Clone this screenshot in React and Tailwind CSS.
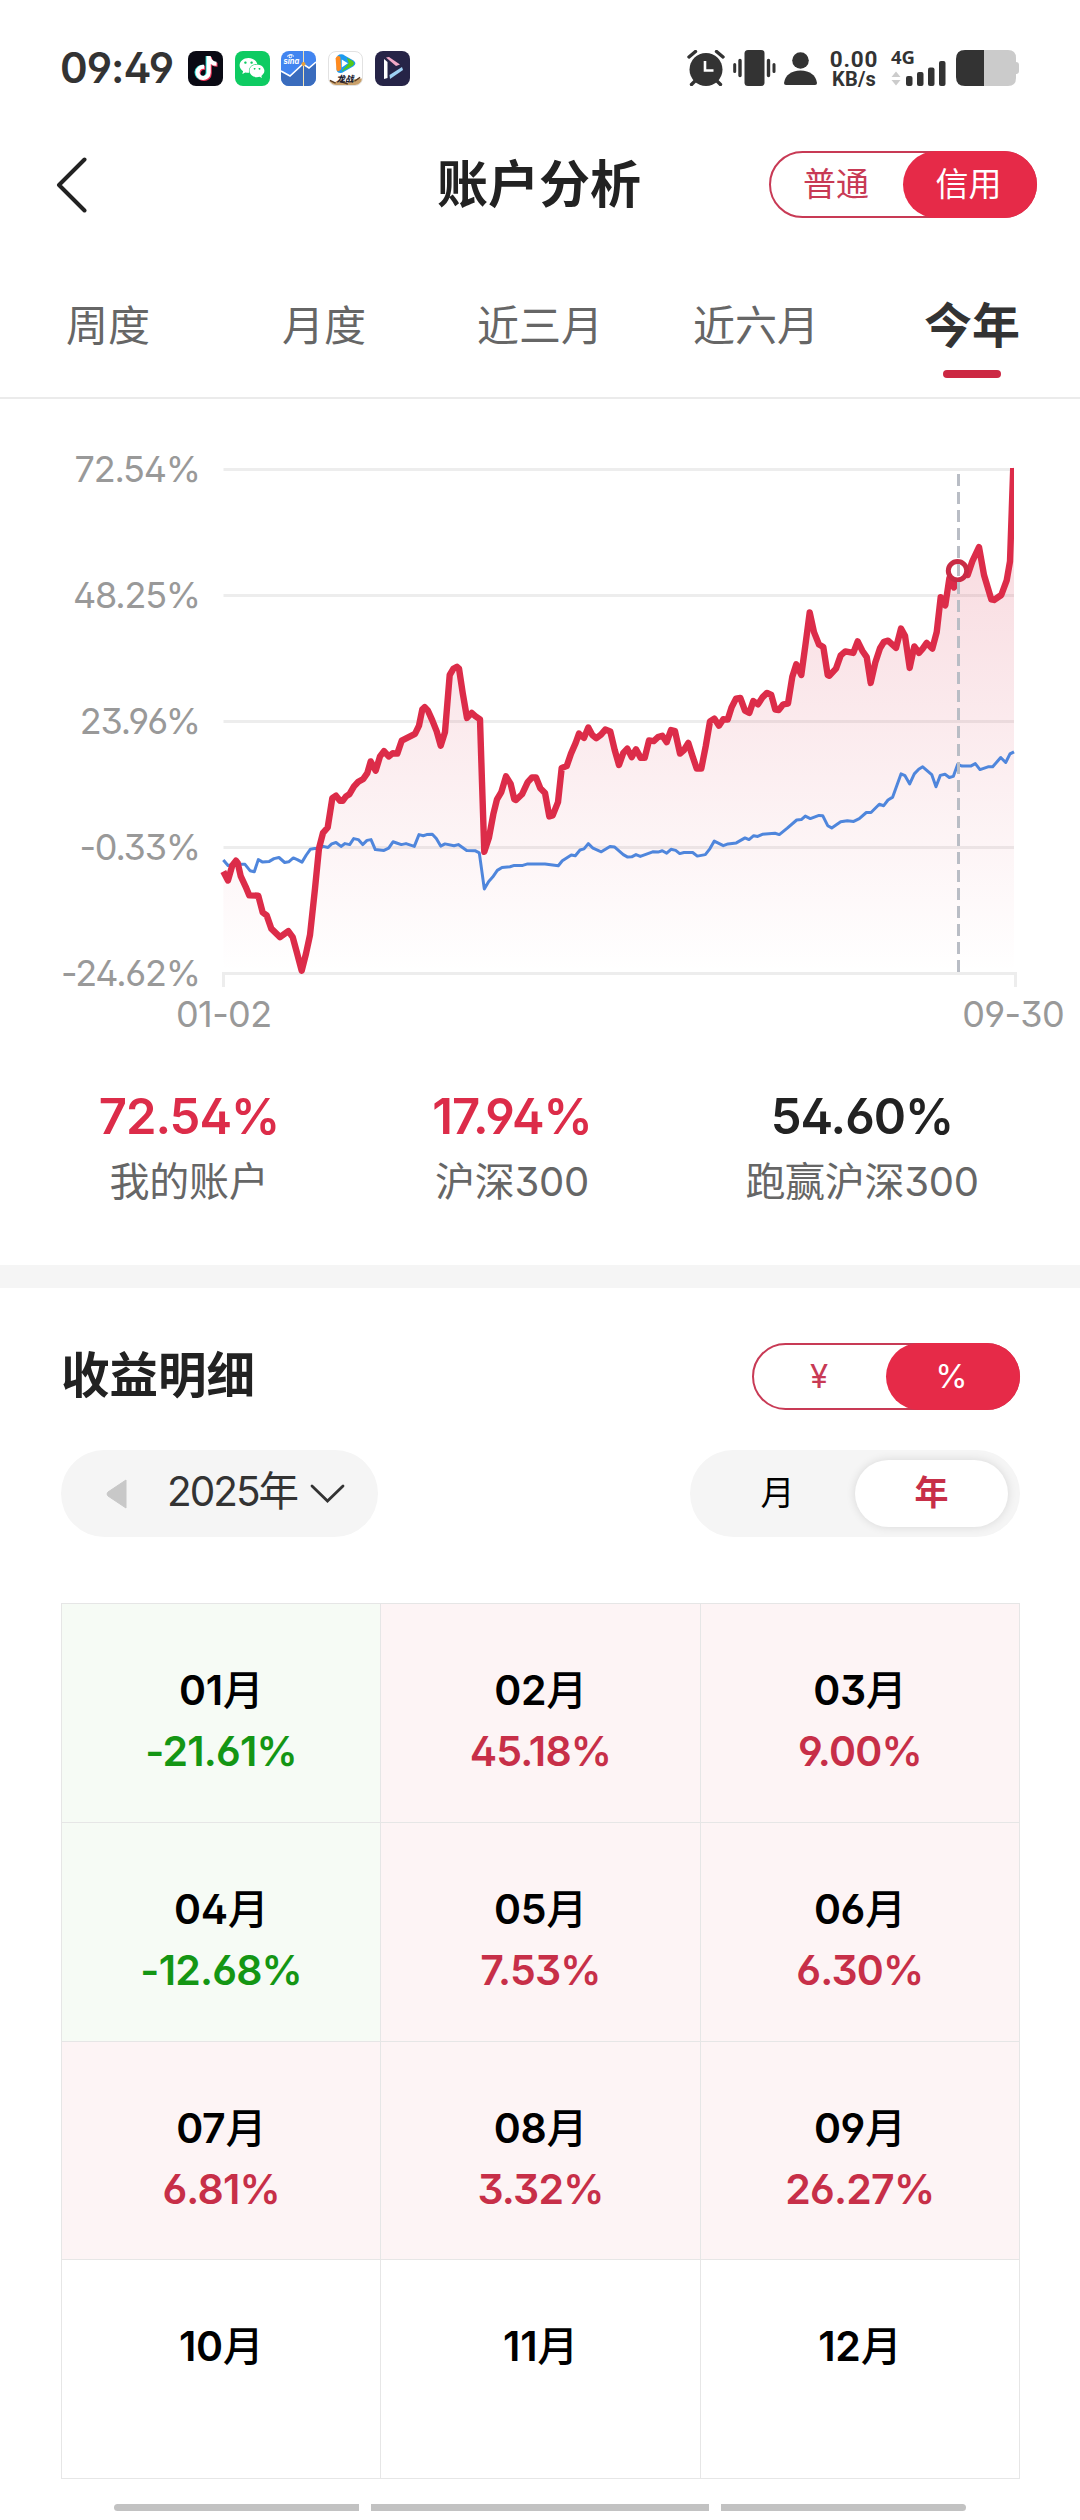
import React, { useState } from 'react';
import { FaTiktok, FaWeixin } from 'react-icons/fa6';

const tabs = ['周度', '月度', '近三月', '近六月', '今年'];

const months = [
  { name: '01', value: '-21.61%' },
  { name: '02', value: '45.18%' },
  { name: '03', value: '9.00%' },
  { name: '04', value: '-12.68%' },
  { name: '05', value: '7.53%' },
  { name: '06', value: '6.30%' },
  { name: '07', value: '6.81%' },
  { name: '08', value: '3.32%' },
  { name: '09', value: '26.27%' },
  { name: '10' },
  { name: '11' },
  { name: '12' },
];

// x,y pairs, three units per pixel across and 2.8 down
const accountData = '70,1180 84,1205 97,1163 108,1150 113,1156 122,1193 137,1223 148,1247 175,1248 188,1295 200,1303 214,1340 240,1364 265,1347 278,1364 290,1405 305,1458 318,1410 330,1358 345,1228 357,1115 369,1072 383,1057 397,975 408,968 420,982 428,982 438,970 448,964 462,942 475,929 490,921 502,905 512,872 527,898 540,858 552,843 566,858 578,849 592,850 605,814 645,795 657,772 667,726 674,720 684,730 697,757 710,788 722,828 735,790 749,630 760,613 771,607 777,612 788,680 801,750 815,736 826,745 840,754 846,930 853,1125 867,1085 880,1020 891,978 904,958 918,914 932,935 943,978 948,980 966,964 983,930 996,917 1008,917 1021,947 1035,960 1048,1026 1058,1023 1074,986 1085,890 1100,885 1113,850 1127,820 1137,794 1152,806 1165,777 1177,798 1189,807 1203,797 1216,783 1231,788 1244,840 1257,882 1270,848 1282,836 1295,860 1308,838 1322,862 1334,862 1347,813 1361,815 1374,804 1387,800 1400,818 1413,784 1425,787 1440,850 1452,840 1465,820 1477,855 1490,892 1504,892 1517,830 1530,760 1543,752 1557,772 1570,754 1583,755 1595,720 1608,696 1621,694 1635,730 1648,736 1660,703 1674,712 1688,692 1701,680 1714,686 1726,727 1736,728 1750,712 1764,710 1777,635 1789,600 1804,630 1817,540 1829,455 1842,510 1857,545 1870,552 1883,630 1888,632 1908,612 1922,575 1936,564 1960,568 1973,536 1987,562 2000,580 2012,652 2026,595 2040,555 2052,537 2064,534 2088,554 2103,500 2115,520 2129,610 2143,550 2157,568 2168,556 2180,540 2197,556 2210,510 2222,412 2236,435 2248,360 2262,385 2272,338 2290,345 2303,350 2317,312 2337,272 2352,350 2374,418 2382,420 2404,406 2420,365 2430,312 2440,45';

const indexData = '70,1148 84,1163 110,1160 135,1160 150,1178 163,1181 175,1147 188,1154 208,1152 222,1144 237,1141 254,1155 266,1153 280,1142 292,1147 306,1154 319,1134 331,1118 344,1116 357,1116 370,1110 384,1113 395,1103 408,1099 423,1110 435,1102 449,1105 461,1088 475,1091 488,1105 501,1093 513,1091 526,1119 552,1121 566,1115 579,1097 592,1101 604,1105 618,1102 643,1110 657,1077 670,1080 680,1077 697,1076 709,1088 722,1109 735,1103 762,1108 775,1105 800,1121 825,1122 838,1128 853,1229 866,1208 878,1196 892,1177 906,1169 930,1167 943,1163 968,1163 983,1159 1035,1159 1075,1164 1087,1150 1114,1134 1126,1136 1140,1120 1152,1117 1165,1102 1179,1115 1204,1125 1230,1110 1244,1112 1270,1133 1283,1140 1295,1139 1308,1133 1321,1138 1358,1125 1374,1126 1387,1122 1400,1129 1413,1118 1427,1121 1439,1130 1452,1127 1478,1127 1492,1137 1516,1133 1530,1116 1543,1095 1570,1108 1584,1103 1609,1100 1635,1086 1647,1091 1661,1080 1673,1082 1687,1076 1725,1073 1738,1077 1762,1059 1790,1036 1804,1035 1816,1025 1831,1032 1857,1023 1868,1024 1883,1052 1895,1058 1922,1041 1942,1038 1961,1040 1978,1032 1999,1015 2013,1015 2038,992 2051,996 2064,980 2078,972 2103,907 2115,912 2129,935 2143,907 2156,894 2168,887 2195,909 2208,943 2221,911 2235,908 2248,917 2260,914 2273,880 2286,885 2312,885 2326,878 2340,895 2364,887 2378,887 2402,861 2417,875 2430,851 2442,845';

const toLine = (data) =>
  data
    .split(' ')
    .map((pair) => pair.split(',').map(Number))
    .map(([x, y]) => `${(x / 3).toFixed(1)},${(y / 2.8).toFixed(1)}`)
    .join(' ');

const AppIcon = ({ className, children }) => (
  <div className={`relative w-[35px] h-[35px] rounded-[8px] overflow-hidden flex items-center justify-center ${className}`}>
    {children}
  </div>
);

const StatusBar = () => (
  <div className="h-[136px] pl-[60px] pr-[60px] pt-[50px] flex items-start justify-between text-[#333]">
    <div className="flex items-center h-9">
      <span className="w-[128px] text-[42px] leading-9 font-semibold tracking-[-1px]">09:49</span>
      <div className="flex gap-[11.7px]">
        <AppIcon className="bg-[#0a0a14]">
          <FaTiktok className="absolute left-[5px] top-[5px] text-[#25e5e0]" size={24} />
          <FaTiktok className="absolute left-[7px] top-[6px] text-[#f5365a]" size={24} />
          <FaTiktok className="absolute left-[6px] top-[5.5px] text-white" size={24} />
        </AppIcon>
        <AppIcon className="bg-[#0ecb62]">
          <FaWeixin className="text-white" size={26} />
        </AppIcon>
        <AppIcon className="bg-[#4285f0]">
          <svg width="35" height="35" viewBox="0 0 35 35">
            <path d="M0 20 L9 25 L22 13 L28 17 L35 11 V35 H0Z" fill="#3a6cbd" />
            <path d="M0 20 L9 25 L22 13 L28 17 L35 11" fill="none" stroke="#fff" strokeWidth="1.6" />
            <path d="M22.5 0 V35" stroke="#f3e3b5" strokeWidth="1" />
            <circle cx="22.5" cy="13" r="2" fill="#e9a13b" />
            <path d="M6 5.500 q4 -4 7 0 M8.200 5.500 a1.300 1.300 0 1 0 2.600 0 a1.300 1.300 0 1 0 -2.600 0" fill="none" stroke="#fff" strokeWidth="1" />
            <text x="2.500" y="12.500" fontSize="7.500" fontStyle="italic" fontWeight="700" fill="#fff">sina</text>
          </svg>
        </AppIcon>
        <AppIcon className="bg-white border border-[#e2e2e2]">
          <svg width="35" height="35" viewBox="0 0 35 35">
            <path d="M9 4 Q13 1 17 4 L26 9 Q30 12 26 15 L14 22 Q8 23 8 18Z" fill="#1d9bf0" />
            <path d="M7 7 Q8 3 12 5 L13 18 Q10 22 8 19Z" fill="#ff8a1e" />
            <path d="M13 21 L25 14.500 Q28 12 25 9.500 L19 6 L21 12Z" fill="#55c919" />
            <path d="M13.500 8 L20 12 L13.500 16.500Z" fill="#fff" />
            <path d="M0 30 L6 32 L12 29 L19 33 L27 29 L35 28 V35 H0Z" fill="#c9a06a" />
            <path d="M1 30 L7 33 M12 31 L20 34 M27 31 L33 27" stroke="#5a3b22" strokeWidth="1.5" />
            <text x="8" y="31.500" fontSize="9" fontWeight="900" fontStyle="italic" fill="#1c1c30">龙战</text>
          </svg>
        </AppIcon>
        <AppIcon className="bg-[#262447]">
          <svg width="35" height="35" viewBox="0 0 35 35">
            <path d="M9 8 L12.500 11 V27 L9 28Z" fill="#fff" />
            <path d="M11 6.500 L14 6 L25 13.500 L21 15Z" fill="#f2a9c6" />
            <path d="M27 16 L28 19 L15 28 L14.500 24Z" fill="#9fd2f5" />
          </svg>
        </AppIcon>
      </div>
    </div>

    <div className="flex items-start h-9">
      <svg width="38" height="36" viewBox="0 0 38 36">
        <circle cx="19" cy="19.500" r="16.500" fill="#333" />
        <path d="M2 7 L8.500 1.500 M36 7 L29.500 1.500 M4.500 34.500 L9 30 M33.500 34.500 L29 30" stroke="#333" strokeWidth="3.4" strokeLinecap="round" />
        <path d="M18 11 V20.500 H26.500" fill="none" stroke="#fff" strokeWidth="2.600" />
      </svg>
      <svg className="ml-[8px]" width="43" height="36" viewBox="0 0 43 36">
        <rect x="11.500" width="20" height="36" rx="3.500" fill="#333" />
        <path d="M7 10.500 V25.500 M35.500 10.500 V25.500" stroke="#333" strokeWidth="3.400" strokeLinecap="round" />
        <path d="M1.700 14.500 V21.500 M41 14.500 V21.500" stroke="#333" strokeWidth="3" strokeLinecap="round" />
      </svg>
      <svg className="ml-[8px]" width="34" height="36" viewBox="0 0 34 36">
        <circle cx="16.500" cy="10.500" r="8.300" fill="#333" />
        <path d="M0 33 Q2 21 16.500 20.500 Q31 21 33 33 Q33 35 31 35 H2 Q0 35 0 33Z" fill="#333" />
      </svg>
      <div className="ml-[8px] w-[56px] flex flex-col items-center font-['Roboto'] font-bold">
        <span className="text-[22.5px] leading-[18px] tracking-[0.8px]">0.00</span>
        <span className="text-[20px] leading-[22px] tracking-[0.2px]">KB/s</span>
      </div>
      <div className="ml-[9px] w-[58px]">
        <div className="text-[18.500px] leading-[14px] font-['Open_Sans'] font-bold">4G</div>
        <svg className="-mt-[4px]" width="56" height="26" viewBox="0 0 56 26">
          <path d="M0.500 17 L5 11.500 L9.500 17Z M0.500 20 L5 25.500 L9.500 20Z" fill="#ccc" />
          <rect x="15" y="16" width="6.500" height="10" rx="2" fill="#333" />
          <rect x="26" y="12" width="6.500" height="14" rx="2" fill="#333" />
          <rect x="37" y="7.500" width="6.500" height="18.500" rx="2" fill="#333" />
          <rect x="48" y="1" width="6.500" height="25" rx="2" fill="#333" />
        </svg>
      </div>
      <svg className="ml-[7px]" width="64" height="36" viewBox="0 0 64 36">
        <path d="M28 0 H52 Q60 0 60 8 V12 Q63 12 63 15 V21 Q63 24 60 24 V28 Q60 36 52 36 H28Z" fill="#cbcbcb" />
        <path d="M28 0 H9 Q0 0 0 9 V27 Q0 36 9 36 H28Z" fill="#333" />
      </svg>
    </div>
  </div>
);

const PillSwitch = ({ left, right }) => (
  <div className="w-[268px] h-[67px] rounded-full border-2 border-[#c83a55] flex text-[33px] leading-none">
    <div className="flex-1 pr-[2px] flex items-center justify-center text-[#c83a55]">{left}</div>
    <div className="w-[134px] pr-[3px] -my-[2px] -mr-[2px] rounded-full bg-[#e62a48] text-white flex items-center justify-center">{right}</div>
  </div>
);

const Chart = () => {
  const account = toLine(accountData);
  return (
    <div className="h-[666px] pt-[51px]">
      <div className="flex">
        <div className="w-[200px] h-[545px] -mt-px flex flex-col justify-between text-right text-[36px] leading-[41px] tracking-[-1.2px] text-[#999]">
          <span>72.54%</span>
          <span>48.25%</span>
          <span>23.96%</span>
          <span>-0.33%</span>
          <span>-24.62%</span>
        </div>
        <svg width="840" height="560" viewBox="0 0 840 560">
          <defs>
            <linearGradient id="fill" x1="0" y1="19" x2="0" y2="523" gradientUnits="userSpaceOnUse">
              <stop offset="0" stopColor="#d8304c" stopOpacity="0.2" />
              <stop offset="1" stopColor="#d8304c" stopOpacity="0" />
            </linearGradient>
            <clipPath id="plot">
              <rect x="20" y="18" width="794" height="506" />
            </clipPath>
          </defs>
          <path d="M23.500 19.500 H814 M23.500 145.500 H814 M23.500 271.500 H814 M23.500 397.500 H814 M22 523.500 H817 M23.500 523 V537 M815.500 523 V537" stroke="#ededed" strokeWidth="3" fill="none" />
          <polygon points={`23.500,523 ${account} 814,19 814,523`} fill="url(#fill)" />
          <polyline points={toLine(indexData)} fill="none" stroke="#4f86dc" strokeWidth="3" strokeLinejoin="round" />
          <g clipPath="url(#plot)">
            <polyline points={account} fill="none" stroke="#dc2c49" strokeWidth="6.400" strokeLinejoin="round" />
          </g>
          <circle cx="757.500" cy="120.700" r="9.200" fill="#fff" stroke="#c92b45" strokeWidth="5" />
          <path d="M758.500 24 V522" stroke="#b9bdc5" strokeWidth="3" strokeDasharray="12 6" />
        </svg>
      </div>
      <div className="-mt-[17px] pl-[176px] pr-[16px] flex justify-between text-[36px] leading-[42px] tracking-[-0.6px] text-[#999]">
        <span>01-02</span>
        <span>09-30</span>
      </div>
    </div>
  );
};

const Stat = ({ value, label, className }) => (
  <div className={`flex flex-col items-center ${className}`}>
    <span className="text-[49px] leading-[56px] font-semibold tracking-[-1px]">{value}</span>
    <span className="mt-[9px] text-[40px] leading-[56px] tracking-[-0.3px] text-[#666]">{label}</span>
  </div>
);

const MonthCell = ({ name, value }) => {
  const down = value && value.startsWith('-');
  const bg = !value ? 'bg-white' : down ? 'bg-[#f6fbf5]' : 'bg-[#fdf4f5]';
  return (
    <div className={`border-r border-b border-[#e6e6e6] pt-[56px] flex flex-col items-center font-semibold text-[41px] leading-[61px] tracking-[-0.8px] ${bg}`}>
      <span className="text-black tracking-[-0.3px]">
        {name}
        <span className="font-medium">月</span>
      </span>
      {value && <span className={down ? 'text-[#149614]' : 'text-[#c72f48]'}>{value}</span>}
    </div>
  );
};

function App() {
  const [activeTab] = useState('今年');

  return (
    <div className="w-[1080px] h-[2520px] overflow-hidden bg-white font-['Inter','Noto_Sans_CJK_SC',sans-serif] [font-feature-settings:'ss01']">
      <StatusBar />

      <header className="h-[132px] pl-[56px] pr-[43px] pt-[15px] flex items-start justify-between">
        <div className="w-[253px] h-[67px] flex items-center">
          <svg width="32" height="56" viewBox="0 0 32 56">
            <path d="M28.500 2.500 L3 28 L28.500 53.500" fill="none" stroke="#222" strokeWidth="4" strokeLinecap="round" strokeLinejoin="round" />
          </svg>
        </div>
        <h1 className="text-[51px] leading-[67px] font-bold text-[#222]">账户分析</h1>
        <PillSwitch left="普通" right="信用" />
      </header>

      <nav className="h-[131px] border-b-2 border-[#ebebeb] grid grid-cols-5">
        {tabs.map((tab) => (
          <div key={tab} className="pt-[25px] flex flex-col items-center">
            {tab === activeTab ? (
              <>
                <span className="text-[48px] leading-[66px] font-bold text-[#333]">{tab}</span>
                <span className="mt-[11px] w-[58px] h-[8px] rounded-full bg-[#cc2843]" />
              </>
            ) : (
              <span className="text-[42px] leading-[66px] text-[#666]">{tab}</span>
            )}
          </div>
        ))}
      </nav>

      <Chart />

      <section className="h-[200px] pt-[24px] flex text-[#dc2c49]">
        <Stat value="72.54%" label="我的账户" className="w-[378px]" />
        <Stat value="17.94%" label="沪深300" className="w-[268px]" />
        <Stat value="54.60%" label="跑赢沪深300" className="w-[432px] text-[#222]" />
      </section>
      <div className="h-[23px] bg-[#f5f5f5]" />

      <section className="pl-[61px] pr-[60px] pt-[55px]">
        <div className="flex items-center justify-between">
          <h2 className="text-[48.5px] leading-[65px] pb-[2px] font-bold text-[#222]">收益明细</h2>
          <PillSwitch left="¥" right="%" />
        </div>

        <div className="mt-[40px] flex justify-between">
          <div className="w-[317px] h-[87px] rounded-full bg-[#f5f5f5] pl-[45px] flex items-center text-[#333]">
            <svg width="22" height="30" viewBox="0 0 22 30">
              <path d="M20 1 V29 L2 17 Q0 15 2 13Z" fill="#c8c8c8" stroke="#c8c8c8" strokeLinejoin="round" />
            </svg>
            <span className="ml-[39px] w-[132px] pb-[2px] text-[40.5px] leading-none tracking-[-2px] whitespace-nowrap">2025年</span>
            <svg className="ml-[11px]" width="36" height="20" viewBox="0 0 36 20">
              <path d="M2 2 L17.500 17 L33 2" fill="none" stroke="#333" strokeWidth="2.800" strokeLinecap="round" />
            </svg>
          </div>
          <div className="w-[330px] h-[87px] rounded-full bg-[#f5f5f5] p-[10px] pr-[12px] flex text-[34px] leading-none">
            <div className="flex-1 pb-[2px] flex items-center justify-center">月</div>
            <div className="w-[153px] pb-[2px] rounded-full bg-white shadow-[0_0_10px_rgba(0,0,0,0.12)] flex items-center justify-center font-bold text-[#c72f48]">年</div>
          </div>
        </div>

        <div className="mt-[66px] h-[876px] border-t border-l border-[#e6e6e6] grid grid-cols-3 grid-rows-4">
          {months.map((month) => (
            <MonthCell key={month.name} {...month} />
          ))}
        </div>
      </section>

      <div className="mt-[25px] pl-[114px] flex gap-3">
        <div className="w-[245px] h-[7px] rounded-l-full bg-[#c2c2c2]" />
        <div className="w-[338px] h-[7px] bg-[#c2c2c2]" />
        <div className="w-[245px] h-[7px] rounded-r-full bg-[#c2c2c2]" />
      </div>
    </div>
  );
}

export default App;
